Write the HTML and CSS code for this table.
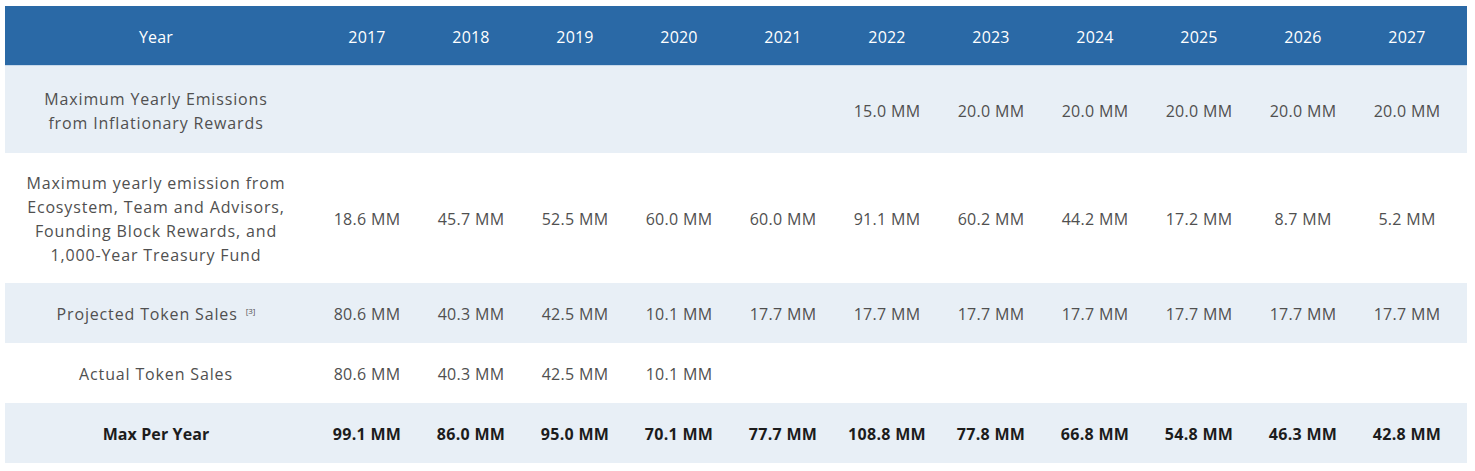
FILE: index.html
```html
<!DOCTYPE html>
<html lang="en">
<head>
<meta charset="utf-8">
<title>Token Emissions</title>
<link rel="stylesheet" href="styles.css">
</head>
<body>
<div class="table">
  <div class="row row-head">
    <div class="cell label">Year</div>
    <div class="cell">2017</div><div class="cell">2018</div><div class="cell">2019</div><div class="cell">2020</div><div class="cell">2021</div><div class="cell">2022</div><div class="cell">2023</div><div class="cell">2024</div><div class="cell">2025</div><div class="cell">2026</div><div class="cell">2027</div>
  </div>
  <div class="row row-shade row-inflation">
    <div class="cell label">Maximum Yearly Emissions<br>from Inflationary Rewards</div>
    <div class="cell"></div><div class="cell"></div><div class="cell"></div><div class="cell"></div><div class="cell"></div><div class="cell">15.0 MM</div><div class="cell">20.0 MM</div><div class="cell">20.0 MM</div><div class="cell">20.0 MM</div><div class="cell">20.0 MM</div><div class="cell">20.0 MM</div>
  </div>
  <div class="row row-ecosystem">
    <div class="cell label">Maximum yearly emission from<br>Ecosystem, Team and Advisors,<br>Founding Block Rewards, and<br>1,000-Year Treasury Fund</div>
    <div class="cell">18.6 MM</div><div class="cell">45.7 MM</div><div class="cell">52.5 MM</div><div class="cell">60.0 MM</div><div class="cell">60.0 MM</div><div class="cell">91.1 MM</div><div class="cell">60.2 MM</div><div class="cell">44.2 MM</div><div class="cell">17.2 MM</div><div class="cell">8.7 MM</div><div class="cell">5.2 MM</div>
  </div>
  <div class="row row-shade">
    <div class="cell label">Projected Token Sales <sup class="ref">[3]</sup></div>
    <div class="cell">80.6 MM</div><div class="cell">40.3 MM</div><div class="cell">42.5 MM</div><div class="cell">10.1 MM</div><div class="cell">17.7 MM</div><div class="cell">17.7 MM</div><div class="cell">17.7 MM</div><div class="cell">17.7 MM</div><div class="cell">17.7 MM</div><div class="cell">17.7 MM</div><div class="cell">17.7 MM</div>
  </div>
  <div class="row">
    <div class="cell label">Actual Token Sales</div>
    <div class="cell">80.6 MM</div><div class="cell">40.3 MM</div><div class="cell">42.5 MM</div><div class="cell">10.1 MM</div><div class="cell"></div><div class="cell"></div><div class="cell"></div><div class="cell"></div><div class="cell"></div><div class="cell"></div><div class="cell"></div>
  </div>
  <div class="row row-shade row-total">
    <div class="cell label">Max Per Year</div>
    <div class="cell">99.1 MM</div><div class="cell">86.0 MM</div><div class="cell">95.0 MM</div><div class="cell">70.1 MM</div><div class="cell">77.7 MM</div><div class="cell">108.8 MM</div><div class="cell">77.8 MM</div><div class="cell">66.8 MM</div><div class="cell">54.8 MM</div><div class="cell">46.3 MM</div><div class="cell">42.8 MM</div>
  </div>
</div>
</body>
</html>
```

FILE: styles.css
```css
* { box-sizing: border-box; }

body {
  margin: 6px 5px;
  background: #ffffff;
  font-family: "Open Sans", "DejaVu Sans", sans-serif;
  font-size: 16px;
  color: #505050;
}

.table {
  width: 1462px;
}

.row {
  display: grid;
  grid-template-columns: 310px repeat(11, 104px);
  padding: 2px 8px 0 0;
  height: 60px;
  align-items: center;
  background: #ffffff;
}

.row-shade { background: #e8eff6; }

.row-head {
  background: #2a69a6;
  color: #ffffff;
  border-bottom: 1px solid #c6d8ea;
}

.row-inflation { height: 87px; }
.row-ecosystem { height: 130px; }

.cell {
  text-align: center;
  line-height: 24px;
  white-space: nowrap;
  letter-spacing: 0.3px;
}

.cell.label {
  padding-right: 8px;
  letter-spacing: 0.85px;
}

.row-head .cell { letter-spacing: 0.2px; }

.ref {
  font-size: 8px;
  vertical-align: 6px;
  line-height: 0;
  margin-left: 3px;
  letter-spacing: 0;
}

.row-total {
  font-weight: 700;
  color: #1c1c1c;
}

.row-total .cell.label { letter-spacing: 0.1px; }
```
